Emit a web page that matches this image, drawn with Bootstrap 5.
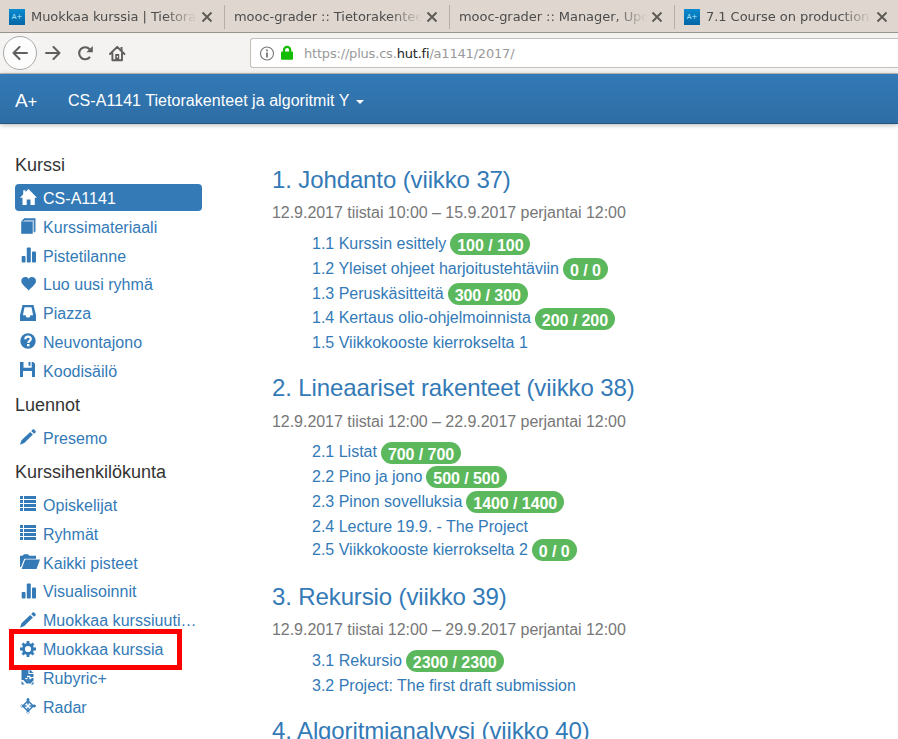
<!DOCTYPE html>
<html lang="fi">
<head>
<meta charset="utf-8">
<meta name="viewport" content="width=device-width, initial-scale=1">
<title>CS-A1141 Tietorakenteet ja algoritmit Y</title>
<link href="https://cdn.jsdelivr.net/npm/bootstrap@5.3.0/dist/css/bootstrap.min.css" rel="stylesheet">
<style>
html, body { height: 100%; overflow: hidden; }
body { font: 16px/22.86px "Liberation Sans", Arial, sans-serif; color: #333; background: #fff; }
a { color: #337ab7; text-decoration: none; }
svg { display: block; flex: none; }
.browser-ui { font-family: "DejaVu Sans", sans-serif; font-size: 13px; line-height: 16px; }
.tab-strip { height: 33px; background: #dfd7cf; border-bottom: 1px solid #9b948d; color: #4c4c4c; width: 900px; }
.browser-tab { width: 225px; padding-left: 9px; height: 32px; position: relative; }
.browser-tab + .browser-tab::before { content: ""; position: absolute; left: -1px; top: 5px; width: 1px; height: 24px; background: #b5aea8; }
.tab-label { flex: 1; padding-top: 1px; letter-spacing: -.05px; white-space: nowrap; overflow: hidden; -webkit-mask-image: linear-gradient(to left, transparent, #000 32px); mask-image: linear-gradient(to left, transparent, #000 32px); }
.favicon { width: 16px; height: 16px; background: linear-gradient(#0a8bd0, #0565a6); color: #b9edff; font-size: 7px; line-height: 16px; text-align: center; margin-right: 6px; flex: none; }
.favicon { margin-top: 1px; }
.tab-close { margin: 1px 12px 0 4px; }
.toolbar { height: 41px; background: #f4f3f1; border-bottom: 1px solid #c5c1bd; padding-left: 3px; }
.back-btn { width: 34px; height: 34px; border: 1px solid #aaa; border-radius: 50%; background: #fcfcfc; }
.address { height: 30px; margin-left: 124px; border: 1px solid #c3bfbb; border-right: 0; border-radius: 3px 0 0 3px; background: #fff; color: #999; padding-left: 9px; }
.address-text { letter-spacing: -.19px; padding: 2px 0 0 1px; }
.address-text span { color: #222; }
.site-bar { height: 50px; background: linear-gradient(#337ab7, #2e6da4); border-bottom: 1px solid #245580; box-shadow: 0 1px 5px rgba(0,0,0,.3); color: #fff; padding: 6px 15px 0; letter-spacing: .05px; }
.site-logo { font-size: 19px; width: 53px; }
.site-logo small { font-size: 16px; }
.caret-down { border: 4px solid transparent; border-top-color: #fff; border-bottom: 0; margin-left: 6px; }
.side { width: 202px; padding: 30.8px 0 0 15px; flex: none; }
.side h4 { font-size: 18px; line-height: 20px; margin: 10.6px 0 9.7px; }
.side h4:first-child { margin-top: 0; }
.side .nav { gap: 2px; }
.side .nav-link { height: 26.82px; padding: 0 0 0 5px; color: #337ab7; border-radius: 4px; }
.side .nav-link.active { background: #337ab7; color: #fff; }
.side .nav-link svg { width: 18px; height: 16px; margin-right: 5px; margin-top: -1px; fill: currentColor; }
.side .nav-link > span { white-space: nowrap; padding-top: 3px; letter-spacing: .03px; }
.callout-frame { position: absolute; left: -6px; top: -7px; width: 173px; height: 41px; border: 5px solid #f00; z-index: 1; }
.rounds { padding: 43px 0 0 70px; }
.round { margin-bottom: 21.1px; }
.round h3 { font-size: 24px; line-height: 26.4px; margin: 0 0 8.8px; white-space: nowrap; letter-spacing: -.12px; }
.dates { color: #777; margin: 0 0 7.2px; white-space: nowrap; letter-spacing: -.04px; }
.round ul { padding-left: 40px; margin: 0; list-style: none; }
.round li { display: flex; align-items: flex-start; height: 22.86px; white-space: nowrap; }
.round li a { padding-top: .7px; }
.round li.scored { height: 24.8px; }
.score { background: #5cb85c; color: #fff; font-weight: 700; border-radius: 11px; height: 22px; line-height: 25px; padding: 0 7px; margin: 1px 0 0 4px; letter-spacing: -.06px; }
</style>
</head>
<body>
<svg class="d-none" xmlns="http://www.w3.org/2000/svg">
  <symbol id="x" viewBox="0 0 12 12"><path d="M1.500 1.500l9 9m0-9l-9 9" stroke="#5c5956" stroke-width="1.900" fill="none"/></symbol>
  <symbol id="bars" viewBox="0 0 18 16"><rect x="1.700" y="9" width="3.800" height="6.500" rx=".8"/><rect x="6.800" y="0.500" width="4" height="15" rx=".8"/><rect x="12" y="4.500" width="4" height="11" rx=".8"/></symbol>
  <symbol id="pencil" viewBox="0 0 18 16"><path d="M0 15.700l1.500-4.400L10.200 2.900l2.700 2.700-8.600 8.500zM11.200 2l1.400-1.400q.8-.7 1.600 0l1.300 1.300q.7.800 0 1.600L14 4.800z"/></symbol>
  <symbol id="list" viewBox="0 0 18 16"><path shape-rendering="crispEdges" d="M0 0h3v3H0zM4 0h12v3H4zM0 4h3v3H0zM4 4h12v3H4zM0 8h3v3H0zM4 8h12v3H4zM0 12h3v3H0zM4 12h12v3H4z"/></symbol>
</svg>
<header class="browser-ui">
  <div class="tab-strip d-flex">
    <div class="browser-tab d-flex align-items-center"><div class="favicon">A+</div><div class="tab-label">Muokkaa kurssia | Tietora</div><svg class="tab-close" width="12" height="12"><use href="#x"/></svg></div>
    <div class="browser-tab d-flex align-items-center"><div class="tab-label">mooc-grader :: Tietorakentee</div><svg class="tab-close" width="12" height="12"><use href="#x"/></svg></div>
    <div class="browser-tab d-flex align-items-center"><div class="tab-label">mooc-grader :: Manager, Upd</div><svg class="tab-close" width="12" height="12"><use href="#x"/></svg></div>
    <div class="browser-tab d-flex align-items-center"><div class="favicon">A+</div><div class="tab-label">7.1 Course on production</div><svg class="tab-close" width="12" height="12"><use href="#x"/></svg></div>
  </div>
  <div class="toolbar d-flex align-items-center">
    <div class="back-btn d-flex align-items-center justify-content-center"><svg width="16" height="14" viewBox="0 0 16 14" fill="none" stroke="#5f5f5f" stroke-width="2" stroke-linecap="round" stroke-linejoin="round"><path d="M15 7H1.500M7.500 1L1.500 7l6 6"/></svg></div>
    <svg class="ms-2" width="16" height="14" viewBox="0 0 16 14" fill="none" stroke="#5f5f5f" stroke-width="2" stroke-linecap="round" stroke-linejoin="round"><path d="M1 7h13.500M8.500 1l6 6-6 6"/></svg>
    <svg width="17" height="16" viewBox="0 0 17 16" style="margin-left:16px"><path d="M13 11.800A6 6 0 1 1 12.600 4.200" fill="none" stroke="#5f5f5f" stroke-width="2.100"/><path d="M15.800 1v6.200H9.300z" fill="#5f5f5f"/></svg>
    <svg width="17" height="17" viewBox="0 0 17 17" style="margin-left:15px"><path d="M1 9l7.200-7.200L15.400 9M3.400 8v7.300h9.600V8" fill="none" stroke="#5f5f5f" stroke-width="1.900" stroke-linejoin="round" stroke-linecap="round"/><path d="M6.200 9h4v6.500h-4zM11.500 2h2v4h-2z" fill="#5f5f5f"/><path d="M7.800 11h1.200v1.400H7.800z" fill="#fff"/></svg>
    <div class="address d-flex align-items-center flex-grow-1">
      <svg width="15" height="15" viewBox="0 0 15 15"><circle cx="7" cy="7.500" r="6.500" fill="none" stroke="#777" stroke-width="1.100"/><path d="M6.100 3.500h1.800v1.800H6.100zM6.100 6.500h1.800v5H6.100z" fill="#777"/></svg>
      <svg class="ms-1" width="16" height="16" viewBox="0 0 16 16"><path d="M5 8V5a3.100 3.100 0 0 1 6.200 0v3" fill="none" stroke="#12bc00" stroke-width="2.200"/><rect x="2" y="6.500" width="12" height="8.300" rx="1" fill="#12bc00"/></svg>
      <div class="ms-2 address-text">https://plus.cs.<span>hut.fi</span>/a1141/2017/</div>
    </div>
  </div>
</header>
<nav class="site-bar d-flex align-items-center"><div class="site-logo">A<small>+</small></div><div>CS-A1141 Tietorakenteet ja algoritmit Y</div><div class="caret-down"></div></nav>
<div class="d-flex">
  <aside class="side">
    <h4>Kurssi</h4>
    <nav class="nav nav-pills flex-column flex-nowrap">
      <a href="#" class="nav-link active d-flex align-items-center"><svg viewBox="0 0 18 16"><path d="M8.500 0l8.500 8.700h-2.200V16h-4.300v-5.500H6.700V16H2.500V8.700H0L3.200 5.300V1.200h2.300v1.800z"/></svg><span>CS-A1141</span></a>
      <a href="#" class="nav-link d-flex align-items-center"><svg viewBox="0 0 18 16"><path d="M1.200 3.500h11.500v12.300H1.200z"/><path d="M1.200 3.500L4.200.3h11.300v13l-1.400 1.400V2.200H4.700L3.200 3.500z"/><path d="M4 2.200h10v12h-1.300V3.500H3z" opacity=".4"/></svg><span>Kurssimateriaali</span></a>
      <a href="#" class="nav-link d-flex align-items-center"><svg><use href="#bars"/></svg><span>Pistetilanne</span></a>
      <a href="#" class="nav-link d-flex align-items-center"><svg viewBox="0 0 18 16"><path d="M8.700 3C10.500-.5 16 .8 16 5c0 3.500-4.400 6-7.300 9.500C5.800 11 1.300 8.500 1.300 5 1.300.8 6.900-.5 8.700 3z"/></svg><span>Luo uusi ryhmä</span></a>
      <a href="#" class="nav-link d-flex align-items-center"><svg viewBox="0 0 18 16"><path fill-rule="evenodd" d="M2.500 0h11L16 10.300V16H0v-5.700zM4.500 2.300L2.900 10.300h2.600l1 2.300h3l1-2.300h2.600L11.500 2.300z"/></svg><span>Piazza</span></a>
      <a href="#" class="nav-link d-flex align-items-center"><svg viewBox="0 0 18 16"><circle cx="8" cy="8" r="7.700"/><path d="M5.300 6.300C5.300 2.700 10.800 2.900 10.800 5.900 10.800 8 8.300 7.800 8.300 10" fill="none" stroke="#fff" stroke-width="2.200"/><path d="M7 11h2.500v2.300H7z" fill="#fff"/></svg><span>Neuvontajono</span></a>
      <a href="#" class="nav-link d-flex align-items-center"><svg viewBox="0 0 18 16"><path d="M0 0h3.500v5.800h8.200V0h1.500L15 1.800V15h-3V9H3v6H0zM8.500 0h2v3.700h-2z"/></svg><span>Koodisäilö</span></a>
    </nav>
    <h4>Luennot</h4>
    <nav class="nav nav-pills flex-column">
      <a href="#" class="nav-link d-flex align-items-center"><svg><use href="#pencil"/></svg><span>Presemo</span></a>
    </nav>
    <h4>Kurssihenkilökunta</h4>
    <nav class="nav nav-pills flex-column flex-nowrap">
      <a href="#" class="nav-link d-flex align-items-center"><svg><use href="#list"/></svg><span>Opiskelijat</span></a>
      <a href="#" class="nav-link d-flex align-items-center"><svg><use href="#list"/></svg><span>Ryhmät</span></a>
      <a href="#" class="nav-link d-flex align-items-center"><svg viewBox="0 0 18 16" overflow="visible"><path d="M0 13V1.800h2.500L4 .3h4l1.300 1.500H16v2.900H4.300L1 13zM5.200 5.500H20l-3.500 9.500H1.600z"/></svg><span>Kaikki pisteet</span></a>
      <a href="#" class="nav-link d-flex align-items-center"><svg><use href="#bars"/></svg><span>Visualisoinnit</span></a>
      <a href="#" class="nav-link d-flex align-items-center"><svg><use href="#pencil"/></svg><span>Muokkaa kurssiuuti…</span></a>
      <a href="#" class="nav-link d-flex align-items-center position-relative"><svg viewBox="0 0 18 16"><circle cx="8" cy="8" r="4.500" fill="none" stroke="currentColor" stroke-width="2.800"/><path d="M8 0v3.500M8 12.500V16M0 8h3.500M12.500 8H16M2.500 2.500l2 2M11.500 11.500l2 2M2.500 13.500l2-2M11.500 4.500l2-2" stroke="currentColor" stroke-width="2.800"/></svg><span>Muokkaa kurssia</span><div class="callout-frame"></div></a>
      <a href="#" class="nav-link d-flex align-items-center"><svg viewBox="0 0 18 16"><path d="M1.500 0h7v5h5v3h-3.200V6.700H7V9H4.800l3.500 4 3.500-4h1.700v2.500l-3 3h-4l-3-3.500H1.500zM9.500 0l4 4h-4zM1.500 12l3 3.500h-3zM13.500 12.500v3H11z"/><path d="M7.500 8h1.800v2.200H11L8.400 13l-2.600-2.800h1.700z"/></svg><span>Rubyric+</span></a>
      <a href="#" class="nav-link d-flex align-items-center"><svg viewBox="0 0 18 16"><path d="M8 2.800L13.200 8 8 13.200 2.800 8z" fill="none" stroke="currentColor" stroke-width="1.400" stroke-linejoin="round"/><path d="M7.200 0h1.600v6.600H7.200zM7.200 9.400h1.600V16H7.200zM0 7.200h6.600v1.600H0zM9.400 7.200H16v1.600H9.400zM5.800 2.300L8 0l2.200 2.300zM5.800 13.700L8 16l2.200-2.300zM2.300 5.800L0 8l2.300 2.200zM13.700 5.800L16 8l-2.300 2.200z"/></svg><span>Radar</span></a>
    </nav>
  </aside>
  <main class="rounds">
    <section class="round">
      <h3><a href="#">1. Johdanto (viikko 37)</a></h3>
      <p class="dates">12.9.2017 tiistai 10:00 – 15.9.2017 perjantai 12:00</p>
      <ul>
        <li class="scored"><a href="#">1.1 Kurssin esittely</a><span class="score">100 / 100</span></li>
        <li class="scored"><a href="#">1.2 Yleiset ohjeet harjoitustehtäviin</a><span class="score">0 / 0</span></li>
        <li class="scored"><a href="#">1.3 Peruskäsitteitä</a><span class="score">300 / 300</span></li>
        <li class="scored"><a href="#">1.4 Kertaus olio-ohjelmoinnista</a><span class="score">200 / 200</span></li>
        <li><a href="#">1.5 Viikkokooste kierrokselta 1</a></li>
      </ul>
    </section>
    <section class="round">
      <h3><a href="#">2. Lineaariset rakenteet (viikko 38)</a></h3>
      <p class="dates">12.9.2017 tiistai 12:00 – 22.9.2017 perjantai 12:00</p>
      <ul>
        <li class="scored"><a href="#">2.1 Listat</a><span class="score">700 / 700</span></li>
        <li class="scored"><a href="#">2.2 Pino ja jono</a><span class="score">500 / 500</span></li>
        <li class="scored"><a href="#">2.3 Pinon sovelluksia</a><span class="score">1400 / 1400</span></li>
        <li><a href="#">2.4 Lecture 19.9. - The Project</a></li>
        <li class="scored"><a href="#">2.5 Viikkokooste kierrokselta 2</a><span class="score">0 / 0</span></li>
      </ul>
    </section>
    <section class="round">
      <h3><a href="#">3. Rekursio (viikko 39)</a></h3>
      <p class="dates">12.9.2017 tiistai 12:00 – 29.9.2017 perjantai 12:00</p>
      <ul>
        <li class="scored"><a href="#">3.1 Rekursio</a><span class="score">2300 / 2300</span></li>
        <li><a href="#">3.2 Project: The first draft submission</a></li>
      </ul>
    </section>
    <section class="round"><h3><a href="#">4. Algoritmianalyysi (viikko 40)</a></h3></section>
  </main>
</div>
<script src="https://cdn.jsdelivr.net/npm/bootstrap@5.3.0/dist/js/bootstrap.bundle.min.js"></script>
</body>
</html>
